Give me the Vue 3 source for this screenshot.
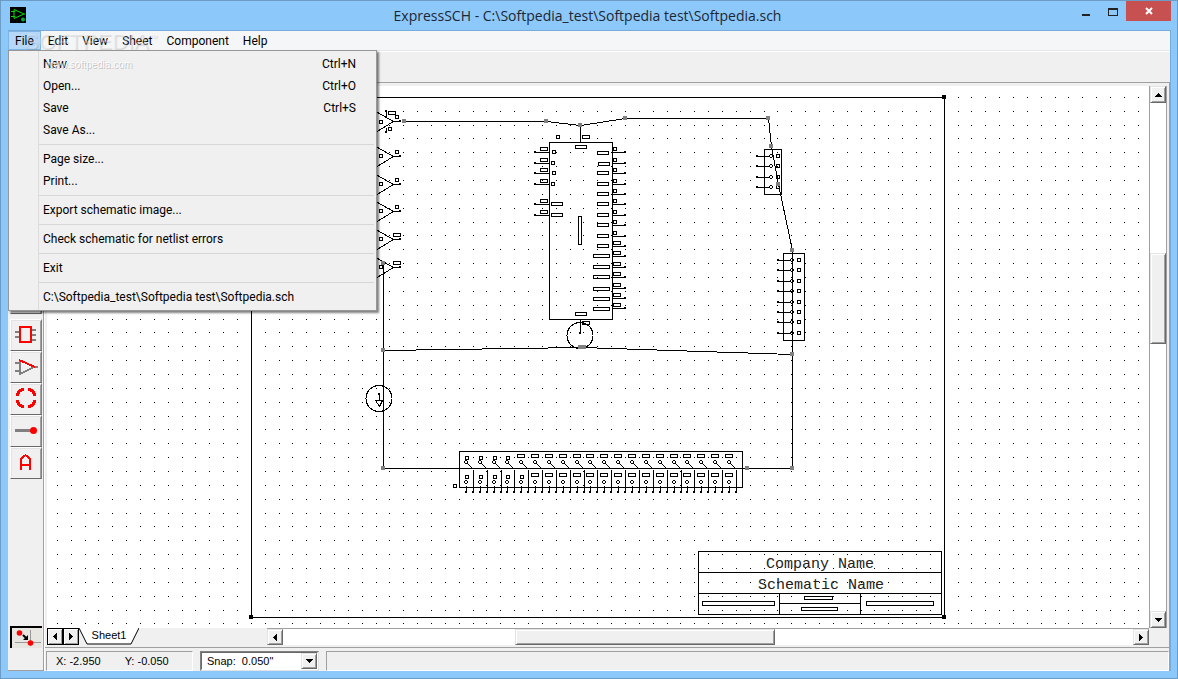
<script setup>
const menus = ['File', 'Edit', 'View', 'Sheet', 'Component', 'Help']

const fileMenu = [
  [
    { label: 'New', keys: 'Ctrl+N' },
    { label: 'Open...', keys: 'Ctrl+O' },
    { label: 'Save', keys: 'Ctrl+S' },
    { label: 'Save As...' }
  ],
  [{ label: 'Page size...' }, { label: 'Print...' }],
  [{ label: 'Export schematic image...' }],
  [{ label: 'Check schematic for netlist errors' }],
  [{ label: 'Exit' }],
  [{ label: 'C:\\Softpedia_test\\Softpedia test\\Softpedia.sch' }]
]

const box = (x, y, w, h = 3) => `M${x} ${y}h${w}v${h}h${-w}z`
const line = (x1, y1, x2, y2) => `M${x1} ${y1}L${x2} ${y2}`

// Snap grid
let gridPath = ''
for (let gx = 57.4; gx < 2600; gx += 13.857) {
  for (let gy = 97.4; gy < 1600; gy += 13.857) {
    gridPath += `M${Math.floor(gx)} ${Math.floor(gy)}h1v1h-1z`
  }
}

const parts = []
const dots = []
const rings = []

// Sheet frame
parts.push(box(251, 97, 693, 520))
const corners = [[251, 97], [944, 97], [251, 617], [944, 617]]

// Buffers
;[121, 156, 184, 211, 239, 267].forEach((y, i) => {
  parts.push(`M370 ${y - 13}L393 ${y}L370 ${y + 14}`)
  parts.push(line(393, y, 400, y))
  dots.push([399, y - 1])
  parts.push(box(379, y - 2 + (i === 0 ? 1 : 0), 3))
  parts.push(i > 3 ? box(393, y - 6, 7) : box(395, y - 6, 3))
})
parts.push(box(388, 111, 7), line(386, 110, 386, 116), box(388, 127, 3), line(386, 127, 386, 132))
dots.push([385, 110], [385, 131])

// Controller chip
parts.push(box(549, 142, 63, 177), box(556, 135, 3), box(582, 135, 7), box(575, 145, 11))
parts.push(box(578, 216, 3, 28), box(575, 312, 11), box(582, 321, 7))
parts.push(line(580, 319, 580, 333))
dots.push([579, 332])
;[152, 163, 173, 184, 204, 215].forEach((y, i) => {
  parts.push(line(535, y, 549, y), box(540, y - 5, 7))
  dots.push([534, y - 1])
  parts.push(i < 4 ? box(i % 2 ? 551 : 552, y - 2, 3) : box(551, y - 2, 11))
})
;[152, 163, 173, 184, 194, 204, 215, 225, 236, 246, 256, 267, 277, 288, 298, 308].forEach((y, i) => {
  parts.push(line(612, y, 625, y), box(613, y - 5, i < 9 ? 3 : 7))
  dots.push([624, y - 1])
  const top = i === 0 || i === 1 || i > 12 ? y - 1 : y - 2
  parts.push(i < 10 ? box(i === 1 ? 598 : 597, top, 11) : box(593, top, 16))
})

// Right-hand headers
parts.push(box(764, 149, 17, 45), box(783, 253, 21, 87))
;[156, 166, 177, 187].forEach((y) => {
  parts.push(line(757, y, 769, y), box(776, y - 2, 3))
  dots.push([756, y - 1])
  rings.push([771, y])
})
;[260, 270, 281, 291, 302, 312, 322, 333].forEach((y) => {
  parts.push(line(778, y, 790, y), box(797, y - 2, 3))
  dots.push([777, y - 1])
  rings.push([792, y])
})

// Bottom switch bank
parts.push(box(459, 451, 283, 36), box(453, 484, 3))
for (let i = 0; i < 20; i++) {
  const x = Math.floor(466.3 + i * 13.85)
  parts.push(i < 4 ? box(x - 1, 456, 3) : box(x - 4, 454, 7))
  parts.push(i < 5 ? box(x - 1, 475, 3) : box(x - 4, 473, 7))
  parts.push(line(x + 1, 463, x + 7, 469), line(x + 7, 469, x + 7, 492), line(x, 485, x, 492))
  rings.push([x, 462], [x, 482])
  dots.push([x - 1, 491], [x + 6, 491])
}

// Title block
parts.push(box(698, 551, 243, 63), line(698, 572, 941, 572), line(698, 593, 941, 593))
parts.push(line(779, 593, 779, 614), line(860, 593, 860, 614), line(779, 603, 860, 603))
parts.push(box(702, 601, 72, 4), box(804, 596, 28), box(801, 607, 36), box(866, 601, 67, 4))

// Ground symbol
parts.push('M379 394V400M375 400H382L379 406Z')
dots.push([378, 393])

const wires = [
  'M404 121H546L580 125L625 118H768L771 146L778 184L792 250V468H383V263',
  'M580 125V142',
  'M383 350L581 347L792 354'
]
const joints = [
  [404, 121], [546, 121], [580, 125], [625, 118], [768, 118], [771, 146], [778, 184], [792, 250],
  [792, 354], [792, 468], [747, 468], [383, 263], [383, 350], [383, 468], [580, 347], [584, 347]
]

const partsPath = parts.join('')
</script>

<template>
  <div class="window">
    <header class="titlebar">
      <svg class="app-icon" width="16" height="16" viewBox="0 0 16 16">
        <rect width="16" height="16" fill="#000" />
        <path d="M4 2.500V11.500M4 2.500L14 7L4 11.500M1 4.500H5M1 9.500H5M14 7H15" fill="none" stroke="#0d0" />
        <circle cx="13" cy="12.500" r="2" fill="#0a3" />
      </svg>
      <h1>ExpressSCH - C:\Softpedia_test\Softpedia test\Softpedia.sch</h1>
      <div class="window-buttons">
        <button class="min" aria-label="Minimize"><svg width="10" height="14" viewBox="0 0 10 14"><rect x="1" y="10" width="8" height="2" fill="#222" /></svg></button>
        <button class="max" aria-label="Maximize"><svg width="10" height="14" viewBox="0 0 10 14"><path d="M0 4H10V12H0ZM1 6V11H9V6Z" fill="#222" fill-rule="evenodd" /></svg></button>
        <button class="close" aria-label="Close"><svg width="8" height="8" viewBox="0 0 8 8"><path d="M1 1L7 7M7 1L1 7" stroke="#fff" stroke-width="2" /></svg></button>
      </div>
    </header>

    <div class="client">
      <nav class="menubar">
        <button v-for="m in menus" :key="m" :class="{ open: m === 'File' }">{{ m }}</button>
      </nav>

      <div class="file-menu" role="menu">
        <div v-for="(group, g) in fileMenu" :key="g" class="group">
          <button v-for="item in group" :key="item.label" role="menuitem">
            <span>{{ item.label }}</span><span>{{ item.keys }}</span>
          </button>
        </div>
      </div>
      <div class="watermark" aria-hidden="true">
        <div class="brand">SOFTPEDIA<sup>™</sup></div>
        <div class="site">www.softpedia.com</div>
      </div>

      <div class="toolbar"></div>

      <div class="work">
        <aside class="tools">
          <button class="tool first" aria-label="Wire"></button>
          <button class="tool" aria-label="Component">
            <svg width="24" height="24" viewBox="0 0 24 24" shape-rendering="crispEdges">
              <path d="M1 9H5M1 14H5M18 7H22M18 12H22M18 17H22" stroke="#808080" stroke-width="2" />
              <rect x="6" y="4" width="11" height="15" fill="none" stroke="#f00" stroke-width="2" />
            </svg>
          </button>
          <button class="tool" aria-label="Symbol">
            <svg width="24" height="24" viewBox="0 0 24 24" shape-rendering="crispEdges">
              <path d="M1 8H5M1 16H5M6 5V19L20 12H24" fill="none" stroke="#808080" stroke-width="2" />
              <path d="M5 5L21 12" stroke="#f00" stroke-width="2" />
            </svg>
          </button>
          <button class="tool" aria-label="Circle">
            <svg width="24" height="24" viewBox="0 0 24 24" shape-rendering="crispEdges">
              <path d="M10 2A9 9 0 0 0 3 9M14 2A9 9 0 0 1 21 9M3 13A9 9 0 0 0 10 20M21 13A9 9 0 0 1 14 20" fill="none" stroke="#f00" stroke-width="3" />
            </svg>
          </button>
          <button class="tool" aria-label="Pin">
            <svg width="24" height="24" viewBox="0 0 24 24">
              <rect x="1" y="10" width="16" height="3" fill="#808080" />
              <circle cx="19.500" cy="11.500" r="3.500" fill="#f00" />
            </svg>
          </button>
          <button class="tool" aria-label="Text">
            <svg width="24" height="24" viewBox="0 0 24 24" shape-rendering="crispEdges">
              <path d="M7 19V8L11.500 4L16 8V19M7 14H16" fill="none" stroke="#f00" stroke-width="2" />
            </svg>
          </button>
          <button class="tool snap" aria-label="Snap to grid">
            <svg width="30" height="20" viewBox="0 0 30 20">
              <path d="M3 14.500H29M18.500 2V18" stroke="#999" />
              <circle cx="7.500" cy="5" r="2.800" fill="#f00" />
              <circle cx="18.500" cy="15" r="2.800" fill="#f00" />
              <path d="M11 7L15 11" stroke="#000" stroke-width="2" />
              <path d="M16 7V12H11Z" fill="#000" />
            </svg>
          </button>
        </aside>

        <main class="editor">
          <div class="sheet-row">
            <div class="sheet">
              <svg width="100%" height="100%" shape-rendering="crispEdges" fill="none" stroke="#000">
                <g transform="translate(-47 -86)">
                  <path :d="gridPath" fill="#000" stroke="none" />
                  <rect v-for="(d, i) in dots" :key="'d' + i" :x="d[0]" :y="d[1]" width="2" height="2" fill="#000" stroke="none" />
                  <path v-for="(r, i) in rings" :key="'r' + i" :d="`M${r[0] - 1} ${r[1] - 2}h2v1h1v2h-1v1h-2v-1h-1v-2h1z M${r[0] - 1} ${r[1] - 1}v2h2v-2z`" fill="#000" fill-rule="evenodd" stroke="none" />
                </g>
                <g transform="translate(-46.5 -85.5)">
                  <path :d="partsPath" />
                  <path v-for="w in wires" :key="w" :d="w" />
                  <circle cx="579.500" cy="335" r="13" />
                  <circle cx="378.500" cy="398" r="13" />
                </g>
                <g transform="translate(-47 -86)" stroke="none">
                  <rect v-for="(j, i) in joints" :key="'j' + i" :x="j[0] - 2" :y="j[1] - 2" width="4" height="4" fill="#808080" />
                  <rect v-for="(c, i) in corners" :key="'c' + i" :x="c[0] - 2" :y="c[1] - 2" width="4" height="4" fill="#000" />
                  <g class="plot-text" fill="#222" text-anchor="middle">
                    <text x="820" y="568">Company Name</text>
                    <text x="821" y="589">Schematic Name</text>
                  </g>
                </g>
              </svg>
            </div>
            <div class="vscroll">
              <button class="bevel arrow" aria-label="Scroll up"><svg width="7" height="4" viewBox="0 0 7 4" shape-rendering="crispEdges"><path d="M0 4L3 0H4L7 4Z" /></svg></button>
              <div class="before"></div>
              <div class="bevel thumb"></div>
              <div class="after"></div>
              <button class="bevel arrow" aria-label="Scroll down"><svg width="7" height="4" viewBox="0 0 7 4" shape-rendering="crispEdges"><path d="M0 0L3 4H4L7 0Z" /></svg></button>
            </div>
          </div>

          <div class="tab-row">
            <button class="bevel arrow boxed" aria-label="Previous sheet"><svg width="4" height="7" viewBox="0 0 4 7" shape-rendering="crispEdges"><path d="M4 0L0 3V4L4 7Z" /></svg></button>
            <button class="bevel arrow boxed" aria-label="Next sheet"><svg width="4" height="7" viewBox="0 0 4 7" shape-rendering="crispEdges"><path d="M0 0L4 3V4L0 7Z" /></svg></button>
            <button class="tab">
              <svg width="60" height="17" viewBox="0 0 60 17"><path d="M0 0L8 16H52L60 0" fill="#fff" stroke="#000" /></svg>
              <span>Sheet1</span>
            </button>
            <div class="hscroll">
              <button class="bevel arrow" aria-label="Scroll left"><svg width="4" height="7" viewBox="0 0 4 7" shape-rendering="crispEdges"><path d="M4 0L0 3V4L4 7Z" /></svg></button>
              <div class="before"></div>
              <div class="bevel thumb"></div>
              <div class="after"></div>
              <button class="bevel arrow" aria-label="Scroll right"><svg width="4" height="7" viewBox="0 0 4 7" shape-rendering="crispEdges"><path d="M0 0L4 3V4L0 7Z" /></svg></button>
            </div>
          </div>

          <footer class="status">
            <div class="panel coords"><span>X: -2.950</span><span>Y: -0.050</span></div>
            <div class="snap-box">
              <select aria-label="Snap"><option>Snap:&nbsp; 0.050"</option></select>
              <span class="bevel drop"><svg width="7" height="4" viewBox="0 0 7 4" shape-rendering="crispEdges"><path d="M0 0L3 4H4L7 0Z" /></svg></span>
            </div>
            <div class="panel message"></div>
          </footer>
        </main>
      </div>
    </div>
  </div>
</template>

<style>
body { margin: 0; }
</style>

<style scoped>
* { box-sizing: border-box; }
button {
  margin: 0;
  padding: 0;
  border: 0;
  background: none;
  font: inherit;
  color: inherit;
  display: flex;
  align-items: center;
  justify-content: center;
}
svg { display: block; flex: none; }
.window {
  height: 100vh;
  display: flex;
  flex-direction: column;
  padding: 0 6px 7px 7px;
  border: 1px solid #6c9bc6;
  background: #8dc8fa;
  font: 12px/16px Roboto, "Open Sans", sans-serif;
  color: #000;
}
.titlebar {
  height: 29px;
  flex: none;
  display: flex;
  align-items: flex-start;
  position: relative;
}
.app-icon { margin: 6px 0 0 2px; }
h1 {
  flex: 1;
  margin: 5px 0 0;
  padding-left: 77px;
  font: 14px/20px "Open Sans", "Noto Sans", sans-serif;
  text-align: center;
  color: #1c2733;
}
.window-buttons { display: flex; }
.window-buttons button { height: 20px; flex: none; }
.min, .max { width: 27px; }
.window-buttons .close { width: 45px; background: #c75050; }
.client {
  flex: 1;
  min-height: 0;
  display: flex;
  flex-direction: column;
  position: relative;
  border: 1px solid #79abd9;
  border-width: 1px 1px 0 0;
  background: #f0f0f0;
}
.menubar { display: flex; height: 20px; flex: none; background: #f5f6f7; border-bottom: 1px solid #e6e6e6; }
.menubar button { padding: 0 7px; height: 19px; }
.menubar .open { background: #b5d7f9; box-shadow: inset 0 0 0 1px #7fb4e6; }
.file-menu {
  position: absolute;
  z-index: 2;
  left: 0;
  top: 19px;
  width: 369px;
  padding: 2px;
  border: 1px solid #979797;
  background: linear-gradient(90deg, #f0f0f0 29px, #dcdcdc 29px, #dcdcdc 30px, #f0f0f0 30px);
  box-shadow: 2px 2px 2px rgba(0, 0, 0, 0.5);
}
.group + .group::before {
  content: "";
  display: block;
  height: 1px;
  margin: 3px 0 3px 28px;
  background: #d7d7d7;
}
.group button { width: 100%; height: 22px; justify-content: space-between; padding: 0 18px 0 32px; }
.watermark { position: absolute; z-index: 3; left: 16px; top: 0; width: 130px; pointer-events: none; text-align: center; }
.brand {
  height: 22px;
  font: 22px/22px "Liberation Sans", sans-serif;
  color: rgba(255, 255, 255, 0.3);
  text-shadow: 1px 1px 1px rgba(120, 120, 120, 0.25);
}
.brand sup { font-size: 9px; line-height: 9px; }
.site {
  padding: 4px 0 0;
  font: 10px/16px "Liberation Sans", sans-serif;
  color: rgba(255, 255, 255, 0.8);
  text-shadow: 1px 1px 0 rgba(120, 120, 120, 0.4);
}
.toolbar { height: 32px; flex: none; border-top: 1px solid #fff; border-bottom: 1px solid #a0a0a0; }
.work { flex: 1; min-height: 0; display: flex; }
.tools {
  width: 36px;
  flex: none;
  display: flex;
  flex-direction: column;
  padding: 199px 0 22px 2px;
  border-right: 1px solid #a0a0a0;
  border-bottom: 1px solid #a0a0a0;
}
.tool {
  width: 32px;
  height: 32px;
  flex: none;
  border: 1px solid;
  border-color: #fff #808080 #696969 #fff;
  box-shadow: inset 1px 1px #e3e3e3, inset -1px 0 #a0a0a0;
}
.first { margin-bottom: 5px; }
.snap {
  height: 22px;
  margin-top: auto;
  border: 2px solid #000;
  border-width: 2px 0 0 2px;
  box-shadow: none;
  background: #e8e6e1;
}
.editor { flex: 1; min-width: 0; display: flex; flex-direction: column; border-left: 1px solid #fff; border-right: 1px solid #a0a0a0; }
.sheet-row { flex: 1; min-height: 0; display: flex; padding: 3px 2px 0 2px; }
.sheet { flex: 1; min-width: 0; overflow: hidden; background: #fff; }
.plot-text { font: 15px "Liberation Mono", monospace; }
.bevel {
  background: #f0f0f0;
  border: 1px solid;
  border-color: #e3e3e3 #696969 #696969 #e3e3e3;
  box-shadow: inset 1px 1px #fff, inset -1px -1px #a0a0a0;
}
.vscroll { width: 18px; flex: none; display: flex; flex-direction: column; background: #fff; border-left: 1px solid #a0a0a0; border-right: 1px solid #a0a0a0; }
.vscroll .arrow { height: 17px; flex: none; }
.vscroll .thumb { height: 91px; flex: none; }
.vscroll .before { flex: 150; }
.vscroll .after { flex: 267; }
.tab-row { display: flex; height: 20px; flex: none; padding: 0 20px 2px 2px; border-bottom: 1px solid #a0a0a0; }
.tab-row .arrow { width: 16px; height: 17px; flex: none; }
.boxed { border-color: #000; }
.tab { position: relative; width: 60px; height: 17px; flex: none; }
.tab span { position: absolute; inset: 0; font: 11px/15px "Liberation Sans", sans-serif; }
.hscroll { flex: 1; display: flex; margin-left: 128px; height: 17px; background: #fff; border-top: 1px solid #a0a0a0; }
.hscroll .arrow { height: 16px; }
.hscroll .thumb { flex: 259; }
.hscroll .before { flex: 232; }
.hscroll .after { flex: 358; }
.status { display: flex; height: 23px; flex: none; padding: 3px 0 0 1px; font: 11px/16px "Liberation Sans", sans-serif; }
.panel { height: 20px; border: 1px solid; border-color: #a0a0a0 #fff #fff #a0a0a0; }
.coords { width: 147px; display: flex; gap: 24px; padding: 1px 9px; }
.message { flex: 1; }
.snap-box { position: relative; width: 119px; height: 20px; margin: 0 7px; border: 1px solid; border-color: #808080 #e3e3e3 #e3e3e3 #808080; }
.snap-box select {
  appearance: none;
  width: 100%;
  height: 18px;
  padding: 0 18px 0 5px;
  border: 1px solid;
  border-color: #696969 #fff #fff #696969;
  border-radius: 0;
  background: #fff;
  font: 11px/16px "Liberation Sans", sans-serif;
  color: #000;
}
.drop { position: absolute; right: 1px; top: 1px; width: 16px; height: 16px; display: flex; align-items: center; justify-content: center; pointer-events: none; }
</style>
